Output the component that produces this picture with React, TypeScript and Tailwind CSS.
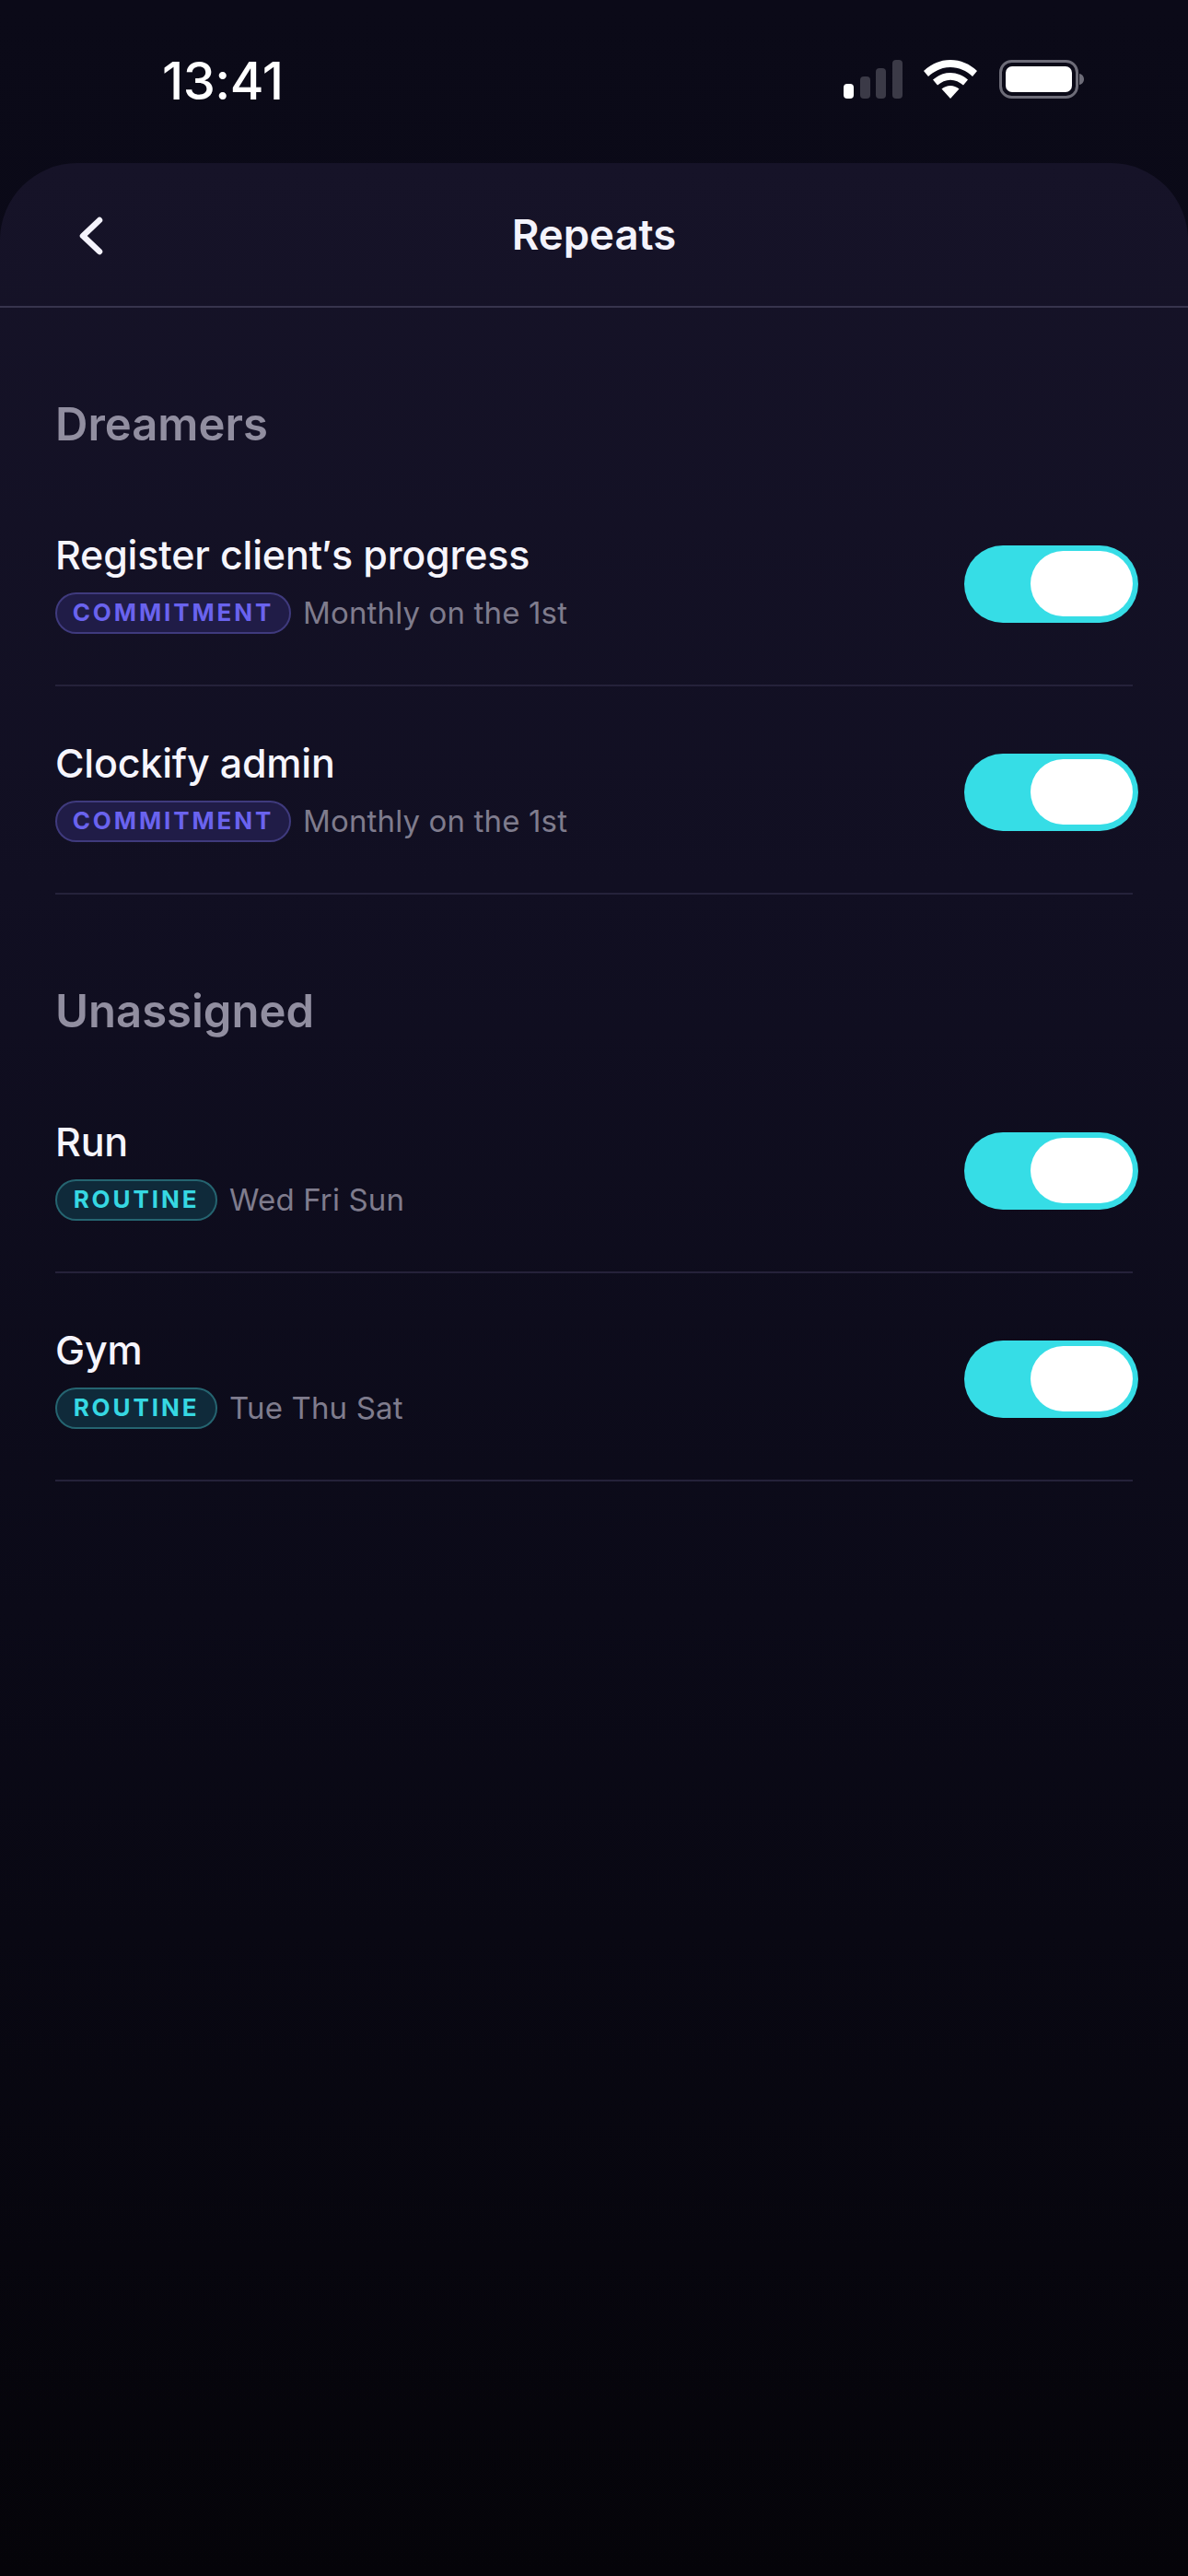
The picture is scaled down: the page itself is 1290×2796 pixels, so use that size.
const font = { fontFamily: '"Inter", "Noto Sans", sans-serif' };

function Signal() {
  return (
    <svg width="64" height="42" viewBox="0 0 64 42" className="block">
      <rect x="0" y="26" width="11" height="16" rx="4" fill="#ffffff" />
      <rect x="18" y="18" width="11" height="24" rx="4" fill="#3b3a47" />
      <rect x="35" y="9" width="11" height="33" rx="4" fill="#3b3a47" />
      <rect x="53" y="0" width="11" height="42" rx="4" fill="#3b3a47" />
    </svg>
  );
}

function Wifi() {
  return (
    <svg width="58" height="42" viewBox="0 0 58 42" className="block">
      <path d="M29 0C18 0 8 4.400 0 12L5 18C11.500 11.800 20 8 29 8C38 8 46.500 11.800 53 18L58 12C50 4.400 40 0 29 0Z" fill="#fff" />
      <path d="M29 14C22 14 15.500 16.800 10 21.500L15 27.500C19 24 24 21.700 29 21.700C34 21.700 39 24 43 27.500L48 21.500C42.500 16.800 36 14 29 14Z" fill="#fff" />
      <path d="M29 28C25.500 28 22.500 29.300 19.500 31.500L29 42L38.500 31.500C35.500 29.300 32.500 28 29 28Z" fill="#fff" />
    </svg>
  );
}

function Battery() {
  return (
    <svg width="92" height="42" viewBox="0 0 92 42" className="block">
      <rect x="1.500" y="1.500" width="83" height="39" rx="12" fill="none" stroke="#6d6c78" strokeWidth="3" />
      <rect x="7" y="7" width="72" height="28" rx="7" fill="#ffffff" />
      <path d="M87 15C90 15.500 92 18 92 21C92 24 90 26.500 87 27Z" fill="#6d6c78" />
    </svg>
  );
}

function Toggle() {
  return (
    <div className="mb-[-2px] mr-[-6px] flex h-[84px] w-[189px] shrink-0 items-start justify-end rounded-full bg-[#36dde6] pr-[6px] pt-[6px]">
      <div className="h-[71px] w-[111px] rounded-full bg-white" />
    </div>
  );
}

function Row({ title, tag, kind, detail }: { title: string; tag: string; kind: 'c' | 'r'; detail: string }) {
  return (
    <div className="flex h-[226px] items-center justify-between border-b-2 border-[#25223a] pt-[3px]">
      <div className="flex flex-col gap-[17px]">
        <div className="text-[43px] leading-[48px] font-medium tracking-[-0.2px] text-[#f6f5fd]">{title}</div>
        <div className="flex items-center gap-[13px]">
          {kind === 'c' ? (
            <span className="flex h-[45px] w-[256px] items-center justify-center rounded-full border-2 border-[#3f3a7d] bg-[#201c47] text-[26px] leading-none font-bold tracking-[2.900px] text-[#6a63ee]">
              {tag}
            </span>
          ) : (
            <span className="flex h-[45px] w-[176px] items-center justify-center rounded-full border-2 border-[#256470] bg-[#0f2a3a] text-[26px] leading-none font-bold tracking-[2.900px] text-[#36d8e2]">
              {tag}
            </span>
          )}
          <span className="text-[33px] leading-[40px] tracking-[0.15px] text-[#7f7c8d]">{detail}</span>
        </div>
      </div>
      <Toggle />
    </div>
  );
}

function Section({ name, children }: { name: string; children: React.ReactNode }) {
  return (
    <section>
      <h2 className="pt-[95px] pb-[26px] text-[49px] leading-[64px] font-semibold text-[#918ea0]">{name}</h2>
      {children}
    </section>
  );
}

export default function App() {
  return (
    <div style={font} className="flex h-[2796px] w-[1290px] flex-col overflow-hidden bg-gradient-to-b from-[#0b0a18] to-[#060510] antialiased">
      <header className="flex h-[177px] shrink-0 items-start justify-between pl-[176px] pr-[113px]">
        <span className="mt-[56px] text-[56px] leading-[64px] font-medium tracking-[-0.5px] text-white">13:41</span>
        <div className="mt-[65px] flex items-end">
          <Signal />
          <div className="ml-[23px]"><Wifi /></div>
          <div className="ml-[24px]"><Battery /></div>
        </div>
      </header>
      <main className="flex-1 rounded-t-[84px] bg-[linear-gradient(180deg,#161328_0%,#110f22_30%,#0b0a18_60%,#050409_100%)]">
        <div className="relative flex h-[157px] items-center justify-center border-b-2 border-[#37344d]">
          <svg width="27" height="42" viewBox="0 0 27 42" className="absolute left-[85px] top-[58px]">
            <path d="M23 4L5 21L23 38" fill="none" stroke="#f4f3fc" strokeWidth="6.500" strokeLinecap="round" strokeLinejoin="round" />
          </svg>
          <span className="text-[45.500px] leading-[52px] font-semibold text-[#f4f3fc]">Repeats</span>
        </div>
        <div className="px-[60px]">
          <Section name="Dreamers">
            <Row title="Register client′s progress" tag="COMMITMENT" kind="c" detail="Monthly on the 1st" />
            <Row title="Clockify admin" tag="COMMITMENT" kind="c" detail="Monthly on the 1st" />
          </Section>
          <Section name="Unassigned">
            <Row title="Run" tag="ROUTINE" kind="r" detail="Wed Fri Sun" />
            <Row title="Gym" tag="ROUTINE" kind="r" detail="Tue Thu Sat" />
          </Section>
        </div>
      </main>
    </div>
  );
}
